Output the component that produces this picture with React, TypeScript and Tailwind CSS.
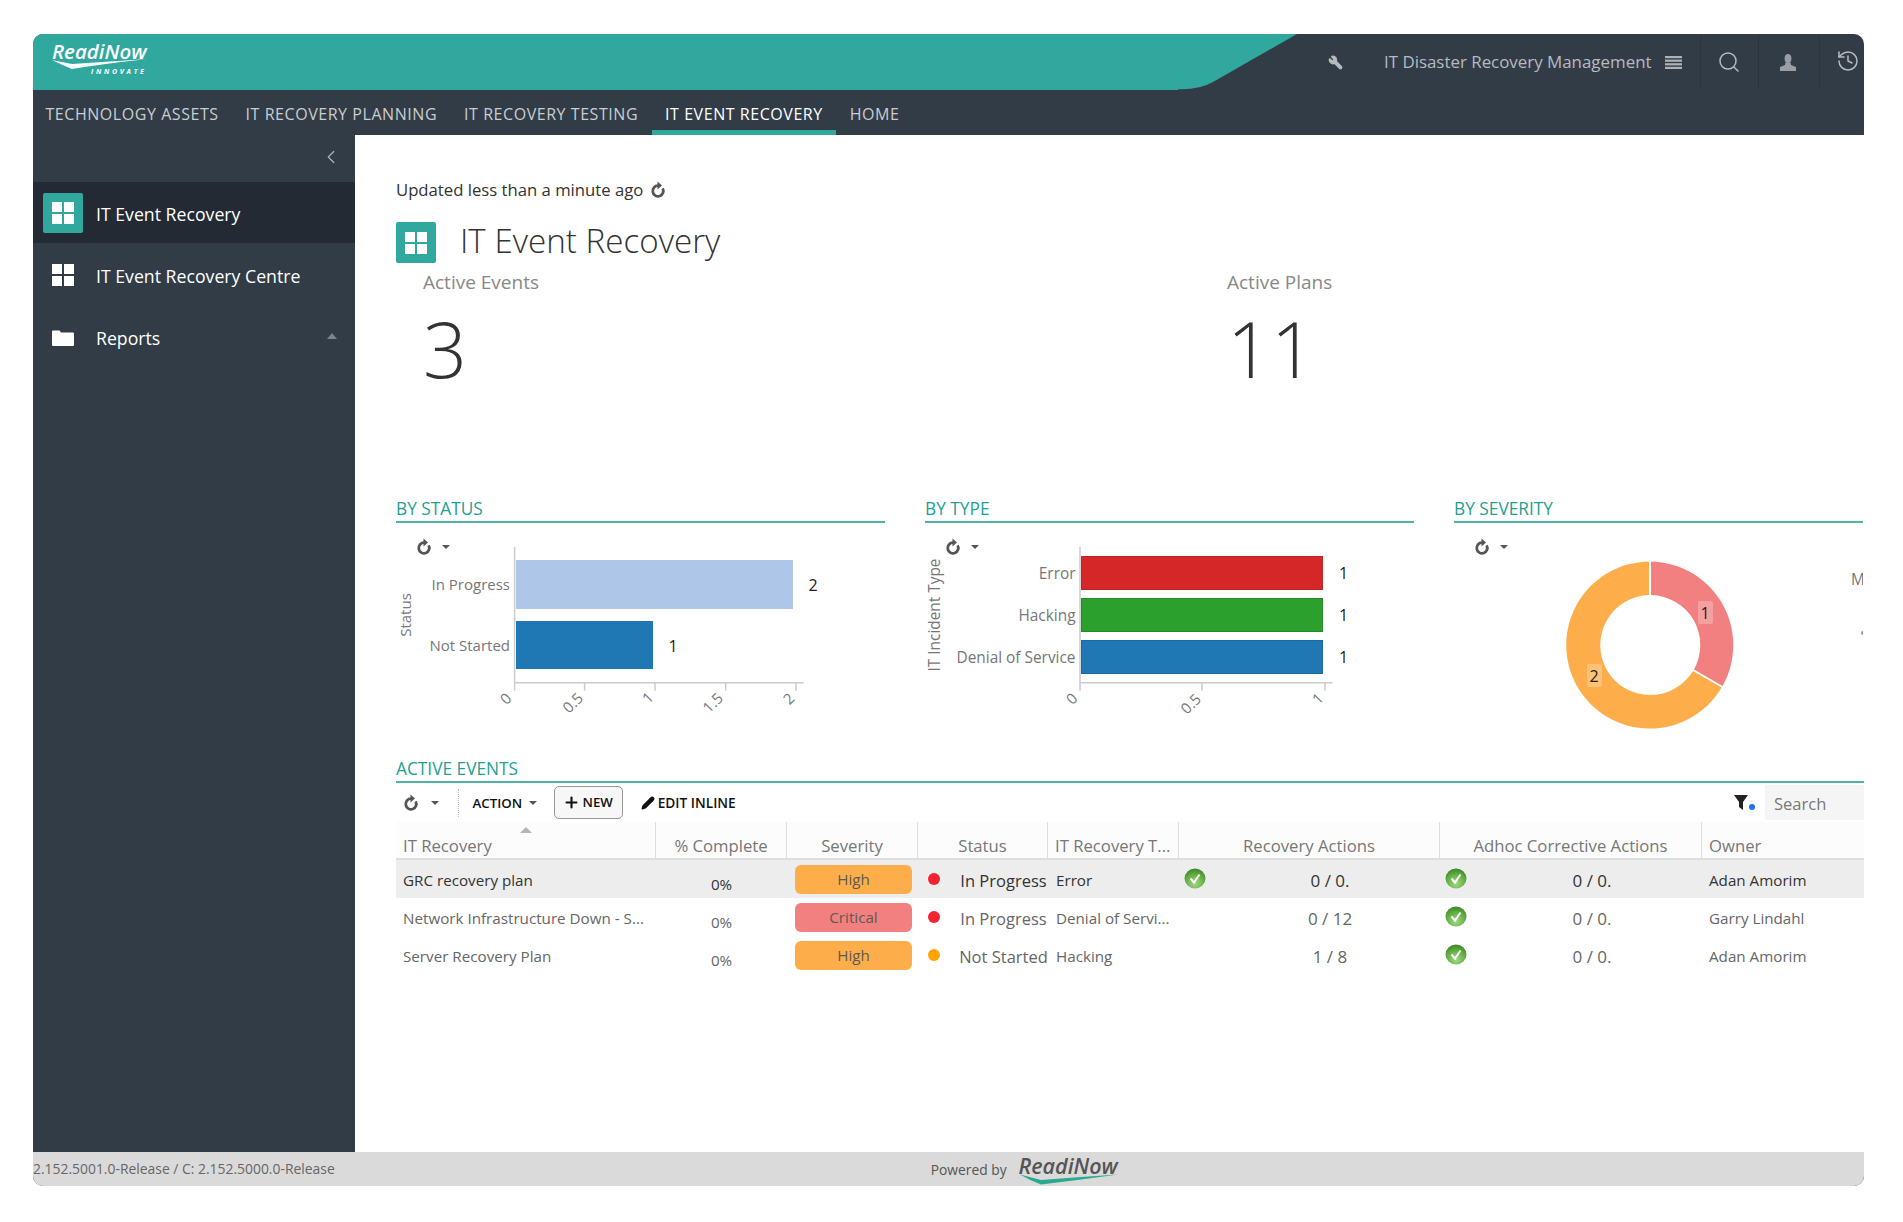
import { ChevronLeft, Pencil, Plus, Search, Wrench, History } from "lucide-react";

const font = "font-['Open_Sans','Noto_Sans',sans-serif]";

function Tiles({ className }: { className: string }) {
  return (
    <svg viewBox="0 0 22 22" className={className} fill="currentColor">
      <rect x="0" y="0" width="10" height="10" />
      <rect x="12" y="0" width="10" height="10" />
      <rect x="0" y="12" width="10" height="10" />
      <rect x="12" y="12" width="10" height="10" />
    </svg>
  );
}

function Caret({ className = "" }: { className?: string }) {
  return <span className={`inline-block h-0 w-0 border-x-[4.5px] border-t-[4.5px] border-x-transparent border-t-[#555] ${className}`} />;
}

function Refresh() {
  return (
    <svg viewBox="0 0 16 18" className="h-[18px] w-[16px] text-[#555]" fill="none" stroke="currentColor">
      <path d="M12.6 7.35A5.300 5.300 0 1 1 8 4.700" strokeWidth="2.8" />
      <path d="M7.500 0.500L12 4.500L7.500 8.500Z" fill="currentColor" stroke="none" />
    </svg>
  );
}

function Check() {
  return (
    <svg viewBox="0 0 22 21" className="h-[21px] w-[22px] shrink-0">
      <defs>
        <radialGradient id="chk" cx="0.5" cy="0.75" r="0.7">
          <stop offset="0" stopColor="#a5d88a" />
          <stop offset="0.55" stopColor="#6cb44a" />
          <stop offset="1" stopColor="#3f8f2a" />
        </radialGradient>
      </defs>
      <ellipse cx="11" cy="10.500" rx="10.500" ry="10" fill="url(#chk)" />
      <path d="M6.500 10.500l3.500 4 5.500-8" fill="none" stroke="#fff" strokeWidth="2" />
    </svg>
  );
}

function SectionTitle({ children }: { children: string }) {
  return <div className="h-[26px] border-b-2 border-[#4fb3a8] text-[17.3px] leading-[24px] text-[#1f9f92]">{children}</div>;
}

function ChartTools() {
  return (
    <div className="absolute left-[20px] top-[15px] flex items-center gap-[10px]">
      <Refresh />
      <Caret />
    </div>
  );
}

function Tick({ x, y, children }: { x: number; y: number; children: string }) {
  return (
    <text transform={`translate(${x},${y}) rotate(-45)`} y="5" textAnchor="middle" fill="#777" fontSize="15">
      {children}
    </text>
  );
}

function StatusChart() {
  return (
    <svg viewBox="0 0 489 192" className="h-[192px] w-[489px]">
      <g fill="#777" fontSize="15">
        <text x="114" y="59" textAnchor="end">In Progress</text>
        <text x="114" y="120" textAnchor="end">Not Started</text>
        <text transform="translate(15,84) rotate(-90)" textAnchor="middle">Status</text>
      </g>
      <path d="M118.600 16V151.700H407.600M118.600 151.700v8M188.600 151.700v8M259 151.700v8M329.700 151.700v8M400 151.700v8" fill="none" stroke="#ccc" strokeWidth="1.5" />
      <rect x="120" y="29" width="277" height="49" fill="#aec7e8" />
      <rect x="120" y="90" width="137" height="48" fill="#1f77b4" />
      <text x="412.500" y="60" fontSize="16" fill="#222">2</text>
      <text x="272.500" y="121" fontSize="16" fill="#222">1</text>
      <Tick x={110} y={168}>0</Tick>
      <Tick x={177} y={172}>0.5</Tick>
      <Tick x={252} y={167}>1</Tick>
      <Tick x={317} y={172}>1.5</Tick>
      <Tick x={393} y={168}>2</Tick>
    </svg>
  );
}

function TypeChart() {
  return (
    <svg viewBox="0 0 489 192" className="h-[192px] w-[489px]">
      <g fill="#777" fontSize="15.400">
        <text x="150.500" y="48" textAnchor="end">Error</text>
        <text x="150.500" y="90" textAnchor="end">Hacking</text>
        <text x="150.500" y="132" textAnchor="end">Denial of Service</text>
        <text transform="translate(15,84) rotate(-90)" textAnchor="middle">IT Incident Type</text>
      </g>
      <path d="M155 16V151.700H407.500M155 151.700v8M277 151.700v8M400 151.700v8" fill="none" stroke="#ccc" strokeWidth="1.5" />
      <rect x="156.500" y="25.500" width="241" height="33" fill="#d62728" stroke="#c42323" />
      <rect x="156.500" y="67.500" width="241" height="33" fill="#2ca02c" stroke="#258a25" />
      <rect x="156.500" y="109.500" width="241" height="33" fill="#1f77b4" stroke="#1a6aa3" />
      <g fontSize="16" fill="#222">
        <text x="414" y="48">1</text>
        <text x="414" y="90">1</text>
        <text x="414" y="132">1</text>
      </g>
      <Tick x={147} y={168}>0</Tick>
      <Tick x={266} y={173}>0.5</Tick>
      <Tick x={393} y={168}>1</Tick>
    </svg>
  );
}

function SeverityChart() {
  return (
    <svg viewBox="0 0 409 200" className="h-[200px] w-[409px]">
      <g transform="translate(1,0)">
        <path d="M196 30.600A83.500 83.500 0 0 1 267.600 154.900L239 138.400A50 50 0 0 0 196 64.100Z" fill="#f28080" />
        <path d="M194 30.600A83.500 83.500 0 1 0 266.600 156.600L238 140A50 50 0 1 1 194 64.100Z" fill="#fdae4b" />
        <rect x="243" y="70" width="15" height="23" rx="2" fill="#fff" fillOpacity="0.25" />
        <rect x="132" y="133" width="15" height="23" rx="2" fill="#fff" fillOpacity="0.25" />
        <text x="250" y="88" fontSize="16" fill="#222" textAnchor="middle">1</text>
        <text x="139" y="151" fontSize="16" fill="#222" textAnchor="middle">2</text>
      </g>
      <text x="397" y="54" fontSize="15.400" fill="#777">M</text>
      <circle cx="409" cy="102" r="2" fill="#999" />
    </svg>
  );
}

const rows = [
  { name: "GRC recovery plan", sev: "High", dot: "bg-[#f3242f]", status: "In Progress", type: "Error", rec: "0 / 0.", tick: true, owner: "Adan Amorim", on: true },
  { name: "Network Infrastructure Down - S...", sev: "Critical", dot: "bg-[#f3242f]", status: "In Progress", type: "Denial of Servi...", rec: "0 / 12", tick: false, owner: "Garry Lindahl", on: false },
  { name: "Server Recovery Plan", sev: "High", dot: "bg-[#ffa500]", status: "Not Started", type: "Hacking", rec: "1 / 8", tick: false, owner: "Adan Amorim", on: false },
];

const cols = "grid grid-cols-[260px_131px_131px_130px_131px_261px_262px_162px]";

function HeadCell({ children, center = false, last = false }: { children: string; center?: boolean; last?: boolean }) {
  return (
    <div className={`flex h-[36px] items-end pb-[1px] text-[16.7px] leading-[22px] text-[#777] ${center ? "justify-center" : "pl-[7px]"} ${last ? "" : "border-r border-[#ddd]"}`}>
      {children}
    </div>
  );
}

function EventsTable() {
  return (
    <div className="relative overflow-hidden">
      <div className={`${cols} border-b-2 border-[#ddd] bg-[#fcfcfc]`}>
        <HeadCell>IT Recovery</HeadCell>
        <HeadCell center>% Complete</HeadCell>
        <HeadCell center>Severity</HeadCell>
        <HeadCell center>Status</HeadCell>
        <HeadCell>IT Recovery T...</HeadCell>
        <HeadCell center>Recovery Actions</HeadCell>
        <HeadCell center>Adhoc Corrective Actions</HeadCell>
        <HeadCell last>Owner</HeadCell>
      </div>
      <span className="absolute left-[124px] top-[5px] h-0 w-0 border-x-[6px] border-b-[6px] border-x-transparent border-b-[#b5b5b5]" />
      {rows.map((r) => (
        <div key={r.name} className={`${cols} h-[38px] items-center text-[15.2px] ${r.on ? "bg-[#ededed] text-[#333]" : "text-[#666]"}`}>
          <div className="truncate pl-[7px] pt-[2px]">{r.name}</div>
          <div className="pt-[10px] text-center">0%</div>
          <div className="pl-[8px] pr-[6px]">
            <div className={`flex h-[29px] items-center justify-center rounded-[6px] text-[#5f5a50] ${r.sev === "High" ? "bg-[#fdae4b]" : "bg-[#f28080]"}`}>{r.sev}</div>
          </div>
          <div className="flex items-center pl-[10px]">
            <span className={`mb-[1px] h-[12px] w-[12px] shrink-0 rounded-full ${r.dot}`} />
            <span className="ml-[19px] w-[89px] whitespace-nowrap pt-[4px] text-center text-[16.5px]">{r.status}</span>
          </div>
          <div className="truncate pl-[8px] pt-[2px]">{r.type}</div>
          <div className="flex items-center pl-[5px] text-[17px]">
            {r.tick ? <span className="mb-[1px] flex"><Check /></span> : <span className="w-[22px]" />}
            <span className="flex-1 pl-[14px] pt-[4px] text-center">{r.rec}</span>
          </div>
          <div className="flex items-center pl-[5px] text-[17px]">
            <span className="mb-[1px] flex"><Check /></span>
            <span className="flex-1 pl-[15px] pt-[4px] text-center">0 / 0.</span>
          </div>
          <div className="pl-[7px] pt-[2px]">{r.owner}</div>
        </div>
      ))}
    </div>
  );
}

export default function App() {
  return (
    <div className={`${font} min-h-[1222px] bg-white pl-[33px] pr-[39px] pt-[34px]`}>
      <div className="flex h-[1152px] flex-col overflow-hidden rounded-[10px] bg-[#323c47]">
        <header className="flex h-[56px] shrink-0">
          <div className="flex w-[1145px] items-center bg-[#31a89e] pl-[19px]">
            <div className="relative h-[40px] w-[100px] text-white">
              <span className="absolute left-0 top-[-4px] text-[20.5px] font-semibold italic leading-[26px]">ReadiNow</span>
              <svg viewBox="0 0 96 11" className="absolute left-0 top-[17px] h-[11px] w-[96px]" fill="#fff">
                <path d="M0 1L20 5Q50 3 95 0Q50 5 20 10Q10 6 0 1Z" />
              </svg>
              <span className="absolute left-[39px] top-[26px] text-[7px] font-bold italic leading-[7px] tracking-[2.7px]">INNOVATE</span>
            </div>
          </div>
          <svg viewBox="0 0 120 56" className="h-[56px] w-[120px] shrink-0" fill="#31a89e">
            <path d="M0 0H119L35 48Q22 55.300 4 55.300H0Z" />
          </svg>
          <div className="flex flex-1 items-center text-[#b6bbc0]">
            <div className="ml-[30px] w-[56px]">
              <Wrench className="h-[15px] w-[15px] -scale-x-100" fill="currentColor" />
            </div>
            <span className="whitespace-nowrap text-[16.9px]">IT Disaster Recovery Management</span>
            <svg viewBox="0 0 17 13" className="ml-[13px] h-[13px] w-[17px] shrink-0" fill="#aeb2b6">
              <rect y="0" width="17" height="2.200" />
              <rect y="3.600" width="17" height="2.200" />
              <rect y="7.200" width="17" height="2.200" />
              <rect y="10.800" width="17" height="2.200" />
            </svg>
            <div className="ml-[18px] flex h-[56px] w-[58px] shrink-0 items-center justify-center border-l border-[#2c353f]">
              <Search className="h-[24px] w-[24px]" strokeWidth={1.5} />
            </div>
            <div className="flex h-[56px] w-[61px] shrink-0 items-center justify-center border-l border-[#2c353f] pr-[2px]">
              <svg viewBox="0 0 16 17" className="h-[17px] w-[16px]" fill="#9a9ea3">
                <ellipse cx="8" cy="4.500" rx="3.400" ry="4.500" />
                <path d="M5.500 8.500h5L11 11l5 2v4H0v-4l5-2z" />
              </svg>
            </div>
            <div className="flex h-[56px] flex-1 items-center justify-center border-l border-[#2c353f] pb-[2px] pl-[13px]">
              <History className="h-[24px] w-[24px]" strokeWidth={1.5} />
            </div>
          </div>
        </header>

        <nav className="flex h-[45px] shrink-0 text-[16px] uppercase tracking-[0.55px] text-[#c9cdd1]">
          <span className="border-b-[5px] border-transparent pl-[12.5px] pr-[13.5px] pt-[8px] leading-[32px]">Technology Assets</span>
          <span className="border-b-[5px] border-transparent px-[13.5px] pt-[8px] leading-[32px]">IT Recovery Planning</span>
          <span className="border-b-[5px] border-transparent px-[13.5px] pt-[8px] leading-[32px]">IT Recovery Testing</span>
          <span className="border-b-[5px] border-[#31a89e] px-[13.5px] pt-[8px] leading-[32px] text-white">IT Event Recovery</span>
          <span className="border-b-[5px] border-transparent px-[13.5px] pt-[8px] leading-[32px]">Home</span>
        </nav>

        <div className="flex min-h-0 flex-1 bg-white">
          <aside className="flex w-[322px] shrink-0 flex-col bg-[#323c47] text-[17.7px] text-white">
            <div className="flex h-[47px] items-center justify-end pb-[3px] pr-[13px] text-[#aeb3b8]">
              <ChevronLeft className="h-[26px] w-[22px]" strokeWidth={1.3} />
            </div>
            <div className="flex h-[61px] items-center bg-[#232a33] pl-[10px]">
              <span className="flex h-[40px] w-[40px] items-center justify-center rounded-[2px] bg-[#31a89e]">
                <Tiles className="h-[22px] w-[22px] text-white" />
              </span>
              <span className="ml-[13px] pt-[4px]">IT Event Recovery</span>
            </div>
            <div className="flex h-[62px] items-center pl-[19px]">
              <Tiles className="mt-[2px] h-[22px] w-[22px] text-white" />
              <span className="ml-[22px] pt-[4px]">IT Event Recovery Centre</span>
            </div>
            <div className="flex h-[62px] items-center pl-[19px]">
              <svg viewBox="0 0 22 17" className="mt-[2px] h-[17px] w-[22px] text-white" fill="currentColor">
                <path d="M1 1.500h6.500L9 3.500h12a1 1 0 0 1 1 1V16a1 1 0 0 1-1 1H1a1 1 0 0 1-1-1V2.500a1 1 0 0 1 1-1z" />
              </svg>
              <span className="ml-[22px] pt-[4px]">Reports</span>
              <span className="ml-auto mr-[18px] h-0 w-0 border-x-[5px] border-b-[6px] border-x-transparent border-b-[#7c838a]" />
            </div>
          </aside>

          <main className="min-w-0 flex-1 overflow-hidden pl-[41px] text-[#333]">
            <div className="flex items-center gap-[7px] pt-[43px] text-[16.7px] leading-[24px]">
              <span>Updated less than a minute ago</span>
              <Refresh />
            </div>
            <div className="mt-[20px] flex items-center">
              <span className="flex h-[41px] w-[40px] items-center justify-center rounded-[2px] bg-[#31a89e]">
                <Tiles className="h-[22px] w-[22px] text-white" />
              </span>
              <h1 className="ml-[24px] pb-[3px] text-[33.2px] font-light leading-[38px]">IT Event Recovery</h1>
            </div>
            <div className="mt-[6px] grid grid-cols-[804px_1fr] pl-[27px]">
              <div>
                <div className="text-[19px] leading-[26px] text-[#888]">Active Events</div>
                <div className="mt-[9px] text-[77px] font-light leading-[90px]">3</div>
              </div>
              <div>
                <div className="text-[19px] leading-[26px] text-[#888]">Active Plans</div>
                <div className="mt-[9px] text-[77px] font-light leading-[90px]">11</div>
              </div>
            </div>

            <div className="mt-[103px] grid grid-cols-[489px_489px_409px] gap-x-[40px]">
              <section>
                <SectionTitle>BY STATUS</SectionTitle>
                <div className="relative pt-[8px]">
                  <StatusChart />
                  <ChartTools />
                </div>
              </section>
              <section>
                <SectionTitle>BY TYPE</SectionTitle>
                <div className="relative pt-[8px]">
                  <TypeChart />
                  <ChartTools />
                </div>
              </section>
              <section>
                <SectionTitle>BY SEVERITY</SectionTitle>
                <div className="relative overflow-hidden pt-[8px]">
                  <SeverityChart />
                  <ChartTools />
                </div>
              </section>
            </div>

            <div className="mt-[26px]">
              <SectionTitle>ACTIVE EVENTS</SectionTitle>
              <div className="flex h-[39px] items-center pl-[7px] text-[13.3px] font-semibold text-[#111]">
                <Refresh />
                <Caret className="ml-[11.5px]" />
                <span className="ml-[19px] h-[28px] border-l border-dotted border-[#bbb]" />
                <span className="ml-[14px] pt-[2px]">ACTION</span>
                <Caret className="ml-[6.5px] mt-[1px]" />
                <span className="ml-[17px] flex h-[33px] w-[69px] items-center justify-center gap-[2px] rounded-[5px] border-[1.5px] border-[#999] bg-[#f7f7f7]">
                  <Plus className="h-[17px] w-[17px]" strokeWidth={3} />
                  <span className="pt-[1px]">NEW</span>
                </span>
                <span className="ml-[18px] flex items-center gap-[3px] pt-[1px] text-[13.7px]">
                  <Pencil className="h-[14px] w-[14px]" fill="currentColor" />
                  EDIT INLINE
                </span>
                <span className="relative ml-auto mr-[17px] flex">
                  <svg viewBox="0 0 14 15" className="h-[15px] w-[14px]" fill="#222">
                    <path d="M0 0H14L9 7V15L5 12V7Z" />
                  </svg>
                  <span className="absolute -right-[7px] bottom-[0px] h-[6px] w-[6px] rounded-full bg-[#1a73e8]" />
                </span>
                <span className="flex h-[35px] w-[99px] items-center bg-[#f5f5f5] pl-[9px] pt-[3px] text-[16.5px] font-normal text-[#777]">Search</span>
              </div>
              <EventsTable />
            </div>
          </main>
        </div>

        <footer className="flex h-[34px] shrink-0 items-center bg-[#dadada] text-[13.9px] text-[#666]">
          <span>2.152.5001.0-Release / C: 2.152.5000.0-Release</span>
          <span className="ml-[596px] pt-[2px] text-[13.8px] text-[#555]">Powered by</span>
          <span className="relative ml-[12px] h-[34px] w-[100px]">
            <span className="absolute left-0 top-[0px] text-[21.5px] font-semibold italic leading-[28px] text-[#555]">ReadiNow</span>
            <svg viewBox="0 0 100 11" className="absolute left-0 top-[22px] h-[11px] w-[100px]" fill="#2aa98f">
              <path d="M1 0.500L22 6Q60 3 99 0.500Q60 6 22 10.500Q10 6 1 0.500Z" />
            </svg>
          </span>
        </footer>
      </div>
    </div>
  );
}
